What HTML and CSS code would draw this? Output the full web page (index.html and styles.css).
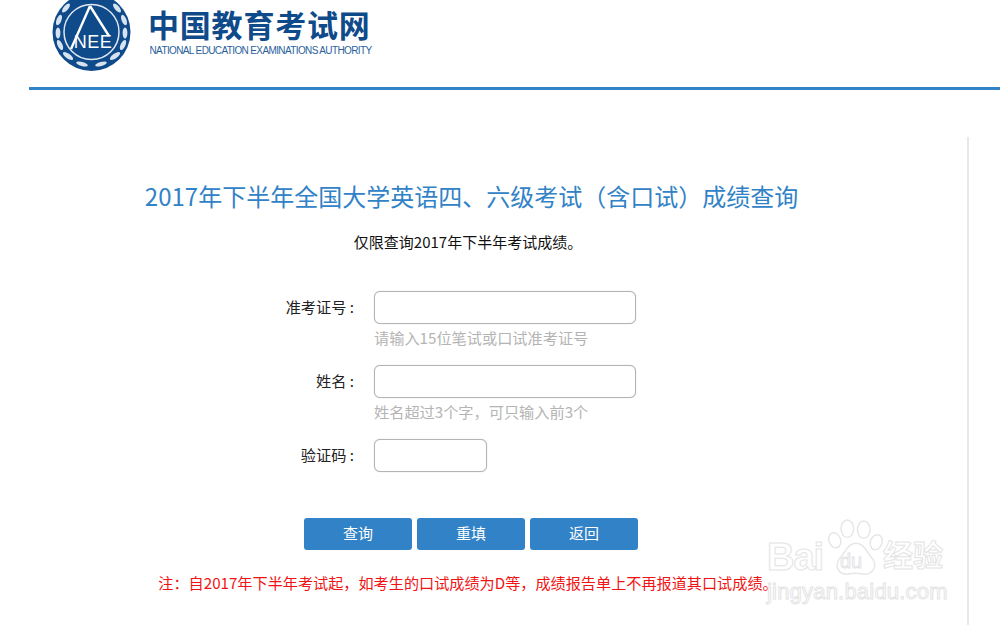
FILE: index.html
```html
<!DOCTYPE html>
<html>
<head>
    <title>2017年下半年全国大学英语四、六级考试（含口试）成绩查询</title>
    <link rel="stylesheet" href="styles.css">
</head>
<body>
    <div class="header">
        <svg class="emblem" width="80" height="72" viewBox="0 0 80 72">
            <circle cx="40.5" cy="32" r="39" fill="#0f4a8a"/>
            <circle cx="40.5" cy="32" r="27.5" fill="none" stroke="#dfe8f2" stroke-width="1.5"/>
            <path d="M39 6 L20 49 M39 6 L58 36" stroke="#fff" stroke-width="2.4" fill="none"/>
            <text x="42" y="48" class="emblem-text" text-anchor="middle">NEE</text>
            <g fill="#d7e3ef">
                <ellipse cx="7" cy="33" rx="2.4" ry="5.5"/>
                <ellipse cx="74" cy="33" rx="2.4" ry="5.5"/>
                <ellipse cx="8" cy="20" rx="2.4" ry="5.5" transform="rotate(22 8 20)"/>
                <ellipse cx="73" cy="20" rx="2.4" ry="5.5" transform="rotate(-22 73 20)"/>
                <ellipse cx="15" cy="8" rx="2.4" ry="5.5" transform="rotate(40 15 8)"/>
                <ellipse cx="66" cy="8" rx="2.4" ry="5.5" transform="rotate(-40 66 8)"/>
                <ellipse cx="9" cy="45" rx="2.4" ry="5.5" transform="rotate(-25 9 45)"/>
                <ellipse cx="72" cy="45" rx="2.4" ry="5.5" transform="rotate(25 72 45)"/>
                <ellipse cx="17" cy="56" rx="2.4" ry="6" transform="rotate(-55 17 56)"/>
                <ellipse cx="64" cy="56" rx="2.4" ry="6" transform="rotate(55 64 56)"/>
                <ellipse cx="31" cy="64" rx="2" ry="6" transform="rotate(-75 31 64)"/>
                <ellipse cx="50" cy="64" rx="2" ry="6" transform="rotate(75 50 64)"/>
            </g>
        </svg>
        <div class="brand">
            <div class="brand-cn">中国教育考试网</div>
            <div class="brand-en">NATIONAL EDUCATION EXAMINATIONS AUTHORITY</div>
        </div>
    </div>

    <div class="panel">
        <h1>2017年下半年全国大学英语四、六级考试（含口试）成绩查询</h1>
        <p class="subtitle">仅限查询2017年下半年考试成绩。</p>

        <div class="form-row">
            <label for="ksbh">准考证号 :</label>
            <div>
                <input type="text" id="ksbh">
                <div class="hint">请输入15位笔试或口试准考证号</div>
            </div>
        </div>
        <div class="form-row">
            <label for="xm">姓名 :</label>
            <div>
                <input type="text" id="xm">
                <div class="hint">姓名超过3个字，可只输入前3个</div>
            </div>
        </div>
        <div class="form-row">
            <label for="yzm">验证码 :</label>
            <div>
                <input type="text" id="yzm" class="short">
            </div>
        </div>

        <div class="buttons">
            <button>查询</button>
            <button>重填</button>
            <button>返回</button>
        </div>

        <p class="note">注：自2017年下半年考试起，如考生的口试成绩为D等，成绩报告单上不再报道其口试成绩。</p>
    </div>

    <div class="watermark">
        <svg class="paw" width="56" height="60" viewBox="0 0 58 62">
            <g fill="#fff" stroke="#e6e6e6" stroke-width="1.5">
                <ellipse cx="20" cy="11" rx="6.5" ry="9"/>
                <ellipse cx="37" cy="12" rx="6.5" ry="9"/>
                <ellipse cx="7" cy="23" rx="6" ry="8" transform="rotate(-20 7 23)"/>
                <ellipse cx="50" cy="25" rx="6" ry="8" transform="rotate(20 50 25)"/>
                <path d="M29 26 C38 26 40 36 46 42 C52 50 46 59 36 58 C31 57 26 57 21 58 C11 59 6 50 12 42 C18 36 20 26 29 26 Z"/>
            </g>
        </svg>
        <span class="wm-bai">Bai</span>
        <span class="wm-du">du</span>
        <span class="wm-cn">经验</span>
        <div class="wm-url">jingyan.baidu.com</div>
    </div>
</body>
</html>
```

FILE: styles.css
```css
html, body {
    height: 100%;
}
body {
    margin: 0;
    overflow: hidden;
    background-color: white;
    font-family: "Noto Sans CJK SC", "Noto Sans", sans-serif;
    font-size: 15px;
    color: #222;
}
.header {
    display: flex;
    height: 87px;
    margin-left: 29px;
    padding-left: 22px;
    border-bottom: 3px solid #3182c6;
}
.emblem {
    display: block;
}
.emblem-text {
    font-family: "Liberation Sans", sans-serif;
    font-size: 18px;
    letter-spacing: 0.5px;
    fill: #fff;
}
.brand {
    margin-left: 19px;
}
.brand-cn {
    margin-top: 3px;
    margin-left: -2px;
    font-size: 31px;
    line-height: 42px;
    font-weight: 700;
    letter-spacing: 0.8px;
    color: #0f4a8a;
}
.brand-en {
    margin-left: -0.5px;
    font-family: "Liberation Sans", sans-serif;
    font-size: 10px;
    line-height: 12px;
    letter-spacing: -0.62px;
    color: #2a5f9c;
}
.panel {
    width: 967px;
    height: 488px;
    margin-top: 47px;
    border-right: 2px solid #e8e8e8;
    box-sizing: content-box;
}
h1 {
    width: 943px;
    margin: 0;
    padding-top: 41px;
    font-size: 24px;
    line-height: 36px;
    font-weight: 400;
    text-align: center;
    color: #3182c6;
}
.subtitle {
    width: 936px;
    margin: 18px 0 0;
    line-height: 20px;
    text-align: center;
    color: #111;
}
.form-row {
    display: flex;
    height: 74px;
}
.subtitle + .form-row {
    margin-top: 39px;
}
.form-row label {
    width: 354px;
    margin-right: 20px;
    font-size: 15.2px;
    line-height: 31px;
    text-align: right;
}
input {
    display: block;
    width: 262px;
    height: 33px;
    margin: 0;
    padding: 0 8px;
    box-sizing: border-box;
    border: 1px solid #b4b4b4;
    border-radius: 6px;
    box-shadow: 0 0 1px #bbb;
    background-color: white;
}
input.short {
    width: 113px;
}
.hint {
    font-size: 15.2px;
    line-height: 26px;
    color: #b4b4b4;
}
.buttons {
    display: flex;
    gap: 5px;
    margin: 5px 0 0 304px;
}
button {
    width: 108px;
    height: 32px;
    padding: 0 0 3px;
    border: none;
    border-radius: 3px;
    background-color: #3182c6;
    color: white;
    font-family: inherit;
    font-size: 15px;
    cursor: pointer;
}
.note {
    width: 936px;
    margin: 21px 0 0;
    font-size: 15.15px;
    line-height: 22px;
    text-align: center;
    color: #f01414;
}
.watermark {
    position: absolute;
    left: 767px;
    top: 517px;
    width: 180px;
    height: 90px;
    white-space: nowrap;
}
.paw {
    position: absolute;
    left: 61px;
    top: 1px;
}
.wm-bai, .wm-du, .wm-cn, .wm-url {
    position: absolute;
    font-family: "Liberation Sans", sans-serif;
    color: #fff;
    -webkit-text-stroke: 1px #e4e4e4;
}
.wm-bai {
    left: 0;
    top: 19px;
    font-size: 38px;
    font-weight: 700;
    letter-spacing: -1px;
}
.wm-du {
    left: 73px;
    top: 33px;
    font-size: 20px;
}
.wm-cn {
    left: 116px;
    top: 14px;
    font-family: "Noto Sans CJK SC", sans-serif;
    font-size: 30px;
    font-weight: 700;
}
.wm-url {
    left: 0;
    top: 62px;
    font-size: 22px;
    letter-spacing: 0.2px;
}
```
